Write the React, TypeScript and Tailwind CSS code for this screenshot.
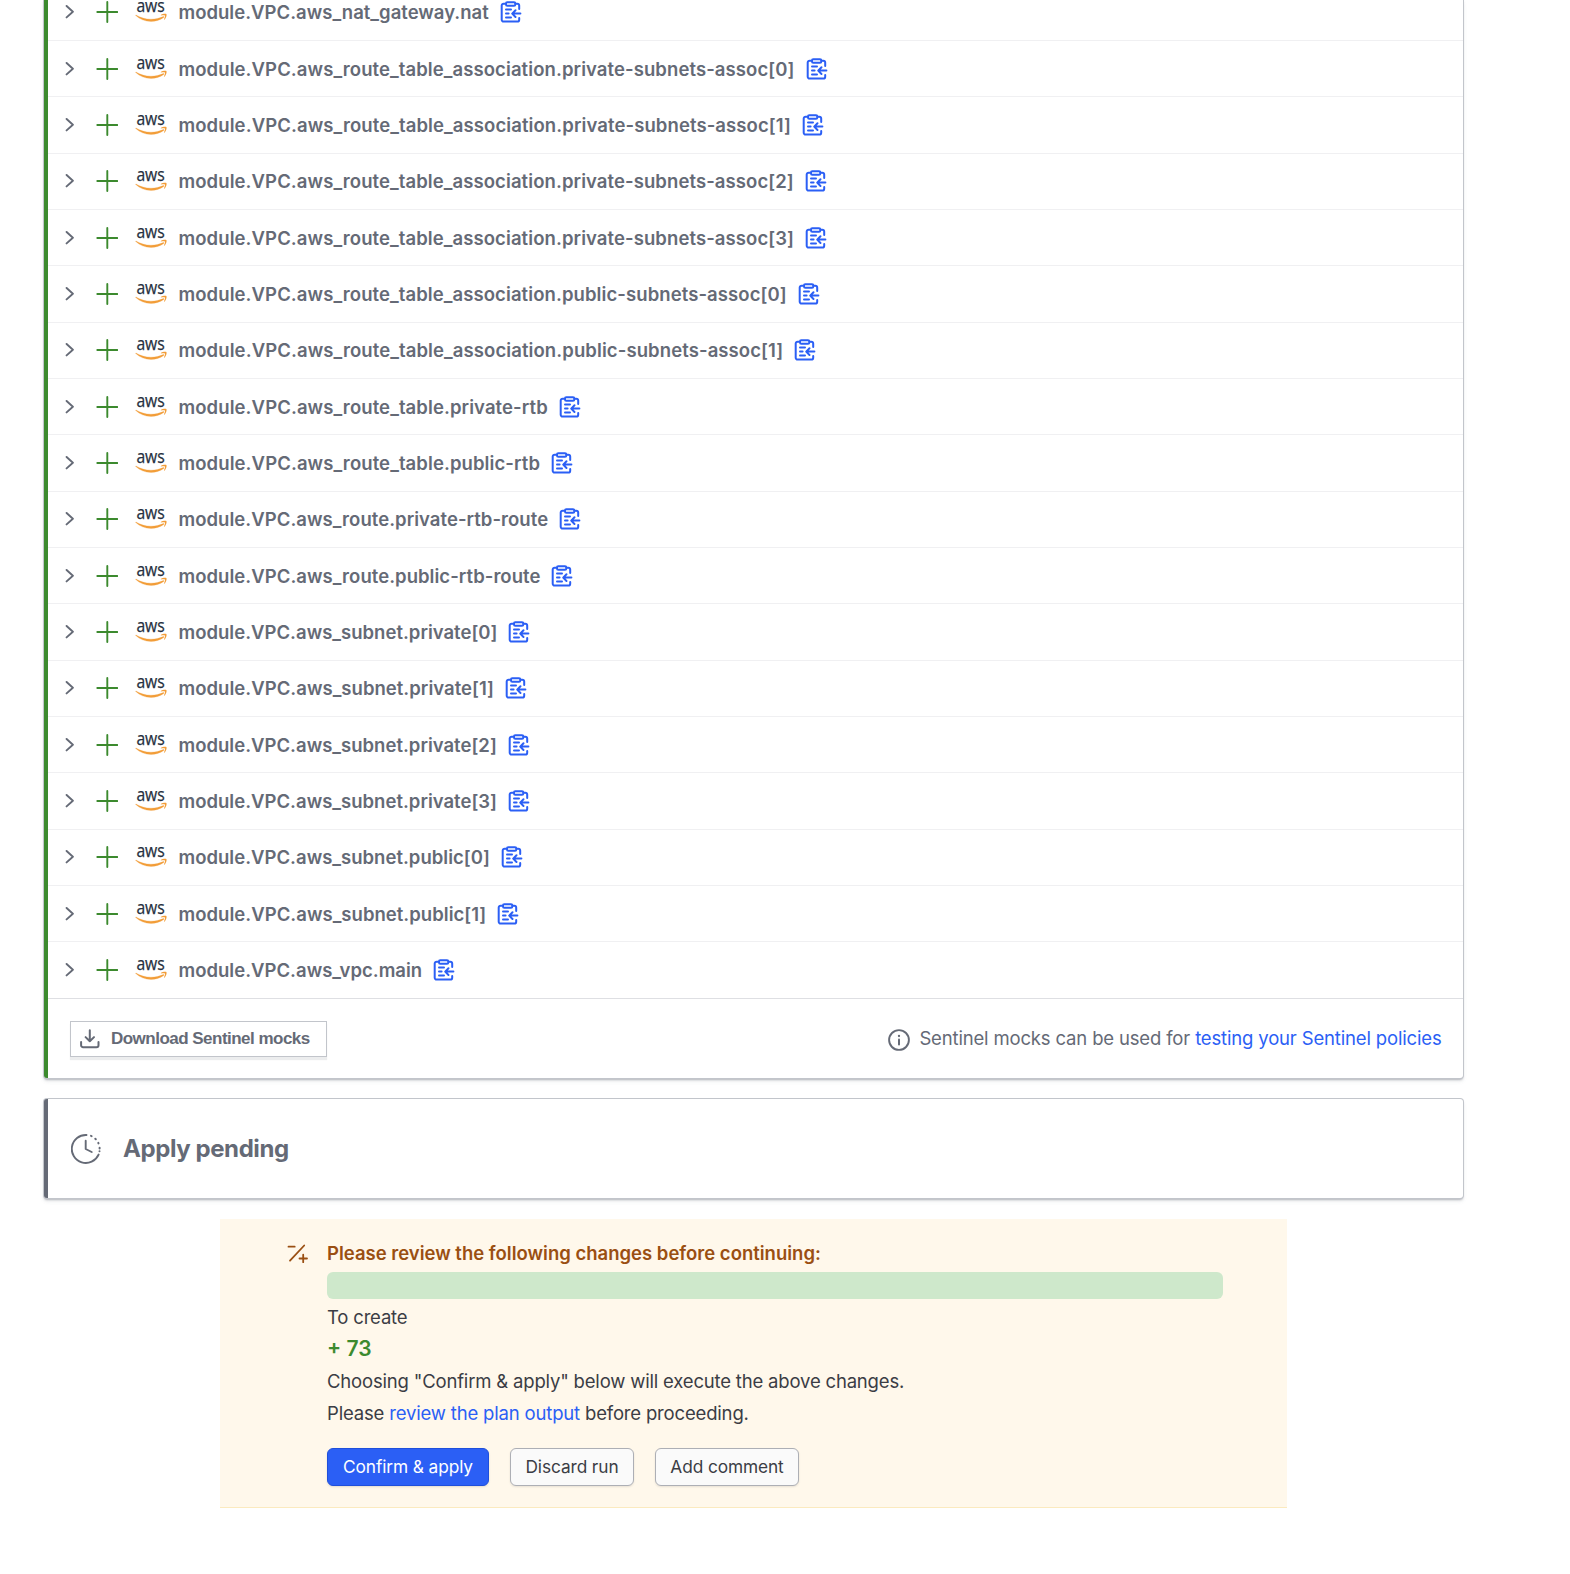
const resources = [
  { name: 'module.VPC.aws_nat_gateway.nat', tracking: 'tracking-[0.02px]' },
  { name: 'module.VPC.aws_route_table_association.private-subnets-assoc[0]', tracking: 'tracking-[0.085px]' },
  { name: 'module.VPC.aws_route_table_association.private-subnets-assoc[1]', tracking: 'tracking-[0.095px]' },
  { name: 'module.VPC.aws_route_table_association.private-subnets-assoc[2]', tracking: 'tracking-[0.085px]' },
  { name: 'module.VPC.aws_route_table_association.private-subnets-assoc[3]', tracking: 'tracking-[0.085px]' },
  { name: 'module.VPC.aws_route_table_association.public-subnets-assoc[0]', tracking: 'tracking-[0.085px]' },
  { name: 'module.VPC.aws_route_table_association.public-subnets-assoc[1]', tracking: 'tracking-[0.095px]' },
  { name: 'module.VPC.aws_route_table.private-rtb', tracking: 'tracking-[0.09px]' },
  { name: 'module.VPC.aws_route_table.public-rtb', tracking: 'tracking-[0.09px]' },
  { name: 'module.VPC.aws_route.private-rtb-route', tracking: 'tracking-[0.04px]' },
  { name: 'module.VPC.aws_route.public-rtb-route', tracking: 'tracking-[0.04px]' },
  { name: 'module.VPC.aws_subnet.private[0]', tracking: 'tracking-[0.01px]' },
  { name: 'module.VPC.aws_subnet.private[1]', tracking: 'tracking-[0.03px]' },
  { name: 'module.VPC.aws_subnet.private[2]', tracking: 'tracking-[0.01px]' },
  { name: 'module.VPC.aws_subnet.private[3]', tracking: 'tracking-[0.01px]' },
  { name: 'module.VPC.aws_subnet.public[0]', tracking: 'tracking-[0.01px]' },
  { name: 'module.VPC.aws_subnet.public[1]', tracking: 'tracking-[0.03px]' },
  { name: 'module.VPC.aws_vpc.main', tracking: 'tracking-[0.01px]' },
];

function ChevronIcon() {
  return (
    <svg className="h-[14px] w-[10px] shrink-0" viewBox="0 0 10 14" fill="none" stroke="#656a76" strokeWidth="1.9" strokeLinecap="round" strokeLinejoin="round">
      <path d="M1.6 1 7.900 6.700 1.600 12.400" />
    </svg>
  );
}

function PlusIcon() {
  return (
    <svg className="h-[22px] w-[22px] shrink-0" viewBox="0 0 22 22" fill="none" stroke="#3c8a2e" strokeWidth="1.9" strokeLinecap="round">
      <path d="M11.300 1v20M1.300 11h20" />
    </svg>
  );
}

function AwsLogo() {
  return (
    <svg className="-mt-3 h-[34px] w-8 shrink-0" viewBox="0 -12 32 34">
      <text x="1.4" y="10.6" textLength="28.4" lengthAdjust="spacingAndGlyphs" fill="#252f3e" stroke="#252f3e" strokeWidth="0.25" fontSize="17.5" fontWeight="500" fontFamily="Open Sans, sans-serif">
        aws
      </text>
      <path d="M1 14c4.300 2.700 9.500 4.200 15 4.200 4.300 0 8.600-1 12.300-2.600.6-.2 1 .4.500.8-3.600 2.600-8.300 4-12.800 4-6 0-11.300-2.200-15.200-5.800-.4-.4 0-.8.200-.6Z" fill="#f29d38" stroke="#f29d38" strokeWidth="0.25" />
      <path d="M31.400 13.100c.6.800-.1 4-2 5.600-.3.200-.6.100-.4-.2.400-1 1.300-3.400.9-3.900-.4-.6-2.800-.3-3.900-.2-.3 0-.4-.2-.1-.5 1.900-1.300 5.100-1.300 5.500-.8Z" fill="#f29d38" />
    </svg>
  );
}

function ClipboardCopyIcon() {
  return (
    <svg className="h-[22px] w-[22px] shrink-0" viewBox="0 0 22 22" fill="none" stroke="#2b5ff5" strokeWidth="2" strokeLinecap="round" strokeLinejoin="round">
      <path d="M6 2.700H3.600A1.900 1.900 0 0 0 1.700 4.600v14.100a1.900 1.900 0 0 0 1.900 1.900h13.700a1.900 1.900 0 0 0 1.900-1.900v-1.800M15.500 2.700h1.800a1.900 1.900 0 0 1 1.900 1.900v3.500" />
      <rect x="6" y="1.200" width="9.300" height="3.500" rx="1.300" />
      <path d="M6 8.500h5M6 12.500h2.600M6 16.600h5M20.400 12.600h-8M15.500 9.300l-3.300 3.300 3.300 3.400" />
    </svg>
  );
}

function DownloadIcon() {
  return (
    <svg className="h-5 w-5 shrink-0" viewBox="0 0 20 20" fill="none" stroke="#656a76" strokeWidth="2" strokeLinecap="round" strokeLinejoin="round">
      <path d="M9.800 1.200v11M5.600 8.100l4.200 4.200L14 8.100M1.100 13v3.200a2 2 0 0 0 2 2h13.400a2 2 0 0 0 2-2V13" />
    </svg>
  );
}

function InfoIcon() {
  return (
    <svg className="h-[22px] w-[22px] shrink-0" viewBox="0 0 22 22" fill="none" stroke="#656a76" strokeWidth="1.9" strokeLinecap="round">
      <circle cx="11" cy="11" r="9.900" />
      <path d="M11 10.500v5" strokeWidth="2" />
      <path d="M11 6.900v.1" strokeWidth="2.300" />
    </svg>
  );
}

function PendingIcon() {
  return (
    <svg className="h-[30px] w-[30px] shrink-0" viewBox="0 0 30 30" fill="none" stroke="#656a76" strokeWidth="1.9" strokeLinecap="round">
      <path d="M15.500 1A14 14 0 1 0 27.600 20.600" />
      <path d="M20 1.900l.6.200M24.300 4.700l.5.500M27.300 8.900l.2.500M28.600 13.800v.6M28.500 17.200v.1" strokeWidth="2" />
      <path d="M14.700 6.700V15l6 3" strokeLinejoin="round" />
    </svg>
  );
}

function DiffIcon() {
  return (
    <svg className="h-[20px] w-[22px] shrink-0" viewBox="0 0 22 20" fill="none" stroke="#9a4f12" strokeWidth="1.8" strokeLinecap="round">
      <path d="M1.500 2.700h6.200M17.200 1.500 3 16.700M12.500 14.500h7.500M16.200 10.700v7.500" />
    </svg>
  );
}

const cardShadow = 'shadow-[0_0_0_1px_#c2c5cb,0_2px_2px_rgba(101,106,118,0.4),0_3px_4px_rgba(101,106,118,0.15)]';

export default function App() {
  return (
    <div className="h-[1574px] w-[1570px] overflow-hidden bg-white pl-[44px] font-['Inter',sans-serif] text-[#656a76]">
      <section className={'h-[1078px] w-[1419px] overflow-hidden rounded-b-[3px] border-l-4 border-[#3c8a2e] bg-white ' + cardShadow}>
        <ul className="-mt-[15.4px]">
          {resources.map(({ name, tracking }) => (
            <li key={name} className="flex h-[56.33px] items-center border-b border-[#f0f0f2] pl-[17px] last:border-[#dedfe3]">
              <ChevronIcon />
              <span className="ml-[21px] flex"><PlusIcon /></span>
              <span className="ml-[17px] flex"><AwsLogo /></span>
              <span className={'ml-[11.5px] text-[18.5px] leading-6 font-semibold whitespace-nowrap ' + tracking}>{name}</span>
              <span className="ml-[11px] flex"><ClipboardCopyIcon /></span>
            </li>
          ))}
        </ul>
        <footer className="flex h-[80px] items-center justify-between pr-[21.5px] pl-[22px]">
          <button className="flex h-[36px] w-[257px] items-center border border-[#c2c5cb] bg-white pl-[9px] shadow-[0_3px_1px_rgba(101,106,118,0.12)]">
            <DownloadIcon />
            <span className="mt-px ml-[11px] font-['Liberation_Sans',Arial,sans-serif] text-[17px] font-bold tracking-[-0.52px] whitespace-nowrap">Download Sentinel mocks</span>
          </button>
          <p className="flex items-center text-[18.5px] tracking-[-0.16px] whitespace-nowrap">
            <span className="mt-[3px] flex"><InfoIcon /></span>
            <span className="ml-[9px]">Sentinel mocks can be used for <a className="text-[#2b5ff5]">testing your Sentinel policies</a></span>
          </p>
        </footer>
      </section>

      <section className={'mt-[21px] flex h-[99px] w-[1419px] items-center rounded-[3px] border-l-4 border-[#656a76] bg-white pl-[23px] ' + cardShadow}>
        <PendingIcon />
        <h2 className="ml-[22px] text-[24px] font-bold tracking-[-0.42px] whitespace-nowrap">Apply pending</h2>
      </section>

      <section className="mt-[21px] ml-[176px] flex h-[289px] w-[1067px] border-b border-[#fbeabf] bg-[#fff8eb] pt-[22px] pl-[67px] text-[18.5px] text-[#3b3d45]">
        <span className="mt-[3px] flex"><DiffIcon /></span>
        <div className="ml-[18px] flex w-[896px] flex-col">
          <h3 className="h-6 leading-6 font-semibold whitespace-nowrap text-[#9a4f12]">Please review the following changes before continuing:</h3>
          <div className="mt-[7px] h-[27px] rounded-[6px] bg-[#cee8cb]" />
          <p className="mt-[6px] h-6 leading-6 tracking-[-0.18px]">To create</p>
          <p className="mt-[6px] h-7 text-[21px] leading-7 font-semibold text-[#3c8a2e]">+ 73</p>
          <p className="mt-[2px] h-8 leading-8 tracking-[-0.18px] whitespace-nowrap">Choosing "Confirm &amp; apply" below will execute the above changes.</p>
          <p className="h-8 leading-8 tracking-[-0.17px] whitespace-nowrap">Please <a className="text-[#2b5ff5]">review the plan output</a> before proceeding.</p>
          <div className="mt-[19px] flex gap-[21px] text-[17.3px] tracking-[-0.1px]">
            <button className="h-[38px] w-[162px] rounded-[6px] border border-[#1f4fdb] bg-[#2b5ff5] whitespace-nowrap text-white shadow-[0_1px_2px_rgba(60,60,60,0.15)]">Confirm &amp; apply</button>
            <button className="h-[38px] w-[124px] rounded-[6px] border border-[#adafb5] bg-[#fafafa] whitespace-nowrap shadow-[0_1px_2px_rgba(60,60,60,0.12)]">Discard run</button>
            <button className="h-[38px] w-[144px] rounded-[6px] border border-[#adafb5] bg-[#fafafa] whitespace-nowrap shadow-[0_1px_2px_rgba(60,60,60,0.12)]">Add comment</button>
          </div>
        </div>
      </section>
    </div>
  );
}
